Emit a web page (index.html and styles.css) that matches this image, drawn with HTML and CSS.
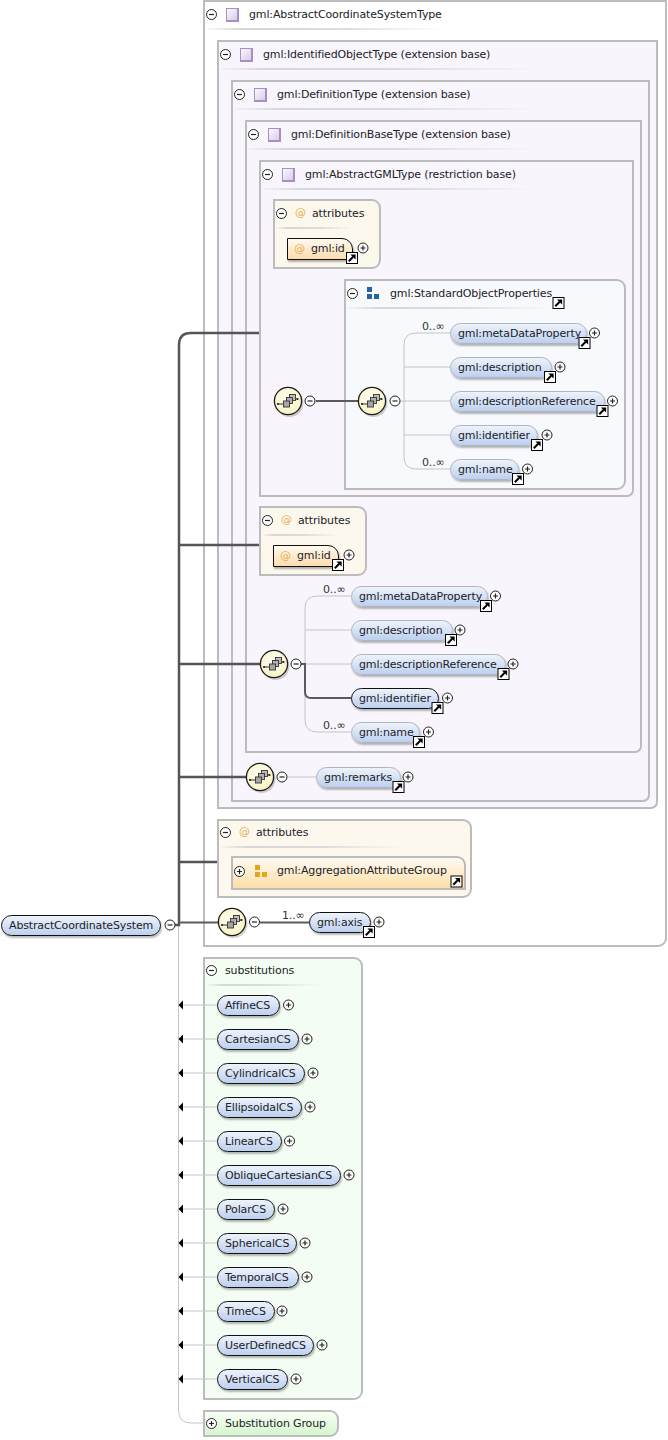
FILE: index.html
```html
<!DOCTYPE html>
<html lang="en">
<head>
<meta charset="utf-8">
<title>AbstractCoordinateSystem</title>
<link rel="stylesheet" href="styles.css">
</head>
<body>
<svg class="defs" aria-hidden="true">
  <defs>
    <g id="minus"><circle r="5" class="tg-c"/><path d="M-2.5 0H2.5" class="tg-l"/></g>
    <g id="plus"><circle r="5" class="tg-c"/><path d="M-2.5 0H2.5M0 -2.5V2.5" class="tg-l"/></g>
    <g id="link">
      <rect x="-5.5" y="-5.5" width="11" height="11" fill="#fff" stroke="#000"/>
      <path d="M-3.2 3.2L1.2 -1.2" stroke="#000" stroke-width="2" fill="none"/>
      <path d="M3.6 -3.6V1.6L-1.6 -3.6Z" fill="#000"/>
    </g>
    <radialGradient id="cg" cx="45%" cy="40%" r="65%">
      <stop offset="0" stop-color="#fffef2"/><stop offset="1" stop-color="#f8f2c0"/>
    </radialGradient>
    <g id="seq">
      <circle cx="1.5" cy="2" r="14" fill="#000" opacity=".18"/>
      <circle r="13.6" fill="url(#cg)" stroke="#1c1c1c" stroke-width="1.3"/>
      <path d="M-10 3H-5M7 -2H9.5" stroke="#333" fill="none"/>
      <circle cx="-10" cy="3" r="1.1" fill="#222"/><circle cx="9.5" cy="-2" r="1.1" fill="#222"/>
      <rect x="1.5" y="-6.5" width="6" height="6" fill="#bdbdbd" stroke="#333" stroke-width=".9"/>
      <rect x="-1.5" y="-3.5" width="6" height="6" fill="#b0b0b0" stroke="#333" stroke-width=".9"/>
      <rect x="-4.5" y="0" width="6" height="6" fill="#a6a6a6" stroke="#333" stroke-width=".9"/>
    </g>
    <g id="arrow"><path d="M0 0L4.5 -4.5V4.5Z" fill="#000"/></g>
    <g id="blocks">
      <rect x="0" y="0" width="5" height="5"/><rect x="0" y="7" width="5" height="5"/><rect x="7" y="7" width="5" height="5"/>
    </g>
  </defs>
</svg>

<main class="diagram">
  <section class="box b-main"><div class="head"><svg class="tg" viewBox="-5.5 -5.5 11 11"><use href="#minus"/></svg><i class="kind"></i><span class="lbl">gml:AbstractCoordinateSystemType</span></div><div class="rule"></div></section>
  <section class="box type b-ident"><div class="head"><svg class="tg" viewBox="-5.5 -5.5 11 11"><use href="#minus"/></svg><i class="kind"></i><span class="lbl">gml:IdentifiedObjectType (extension base)</span></div><div class="rule"></div></section>
  <section class="box type b-def"><div class="head"><svg class="tg" viewBox="-5.5 -5.5 11 11"><use href="#minus"/></svg><i class="kind"></i><span class="lbl">gml:DefinitionType (extension base)</span></div><div class="rule"></div></section>
  <section class="box type b-base"><div class="head"><svg class="tg" viewBox="-5.5 -5.5 11 11"><use href="#minus"/></svg><i class="kind"></i><span class="lbl">gml:DefinitionBaseType (extension base)</span></div><div class="rule"></div></section>
  <section class="box type b-gml"><div class="head"><svg class="tg" viewBox="-5.5 -5.5 11 11"><use href="#minus"/></svg><i class="kind"></i><span class="lbl">gml:AbstractGMLType (restriction base)</span></div><div class="rule"></div></section>

  <section class="box attrs b-at1"><div class="head"><svg class="tg" viewBox="-5.5 -5.5 11 11"><use href="#minus"/></svg><span class="at">@</span><span class="lbl">attributes</span></div><div class="rule"></div><div class="attr"><span class="at">@</span>gml:id</div></section>
  <section class="box attrs b-at2"><div class="head"><svg class="tg" viewBox="-5.5 -5.5 11 11"><use href="#minus"/></svg><span class="at">@</span><span class="lbl">attributes</span></div><div class="rule"></div><div class="attr"><span class="at">@</span>gml:id</div></section>
  <section class="box attrs b-at3"><div class="head tight"><svg class="tg" viewBox="-5.5 -5.5 11 11"><use href="#minus"/></svg><span class="at">@</span><span class="lbl">attributes</span></div><div class="rule"></div>
    <div class="group"><svg class="tg" viewBox="-5.5 -5.5 11 11"><use href="#plus"/></svg><svg class="blocks gold" viewBox="0 0 12 12"><use href="#blocks"/></svg><span class="lbl">gml:AggregationAttributeGroup</span></div>
  </section>

  <section class="box b-sop"><div class="head"><svg class="tg" viewBox="-5.5 -5.5 11 11"><use href="#minus"/></svg><svg class="blocks blue" viewBox="0 0 12 12"><use href="#blocks"/></svg><span class="lbl">gml:StandardObjectProperties</span></div><div class="rule"></div>
    <div class="list l-sop">
      <div class="pill w-meta">gml:metaDataProperty</div>
      <div class="pill w-desc">gml:description</div>
      <div class="pill w-ref">gml:descriptionReference</div>
      <div class="pill w-id">gml:identifier</div>
      <div class="pill w-name">gml:name</div>
    </div>
  </section>

  <div class="list l-base">
    <div class="pill w-meta">gml:metaDataProperty</div>
    <div class="pill w-desc">gml:description</div>
    <div class="pill w-ref">gml:descriptionReference</div>
    <div class="pill req w-id">gml:identifier</div>
    <div class="pill w-name">gml:name</div>
  </div>
  <div class="pill n-remarks">gml:remarks</div>
  <div class="pill req n-axis">gml:axis</div>
  <div class="pill req n-root">AbstractCoordinateSystem</div>

  <section class="box b-sub"><div class="head tight"><svg class="tg" viewBox="-5.5 -5.5 11 11"><use href="#minus"/></svg><span class="lbl sub-lbl">substitutions</span></div><div class="rule"></div>
    <div class="list l-sub">
      <div class="pill req s-affine">AffineCS</div>
      <div class="pill req s-cart">CartesianCS</div>
      <div class="pill req s-cyl">CylindricalCS</div>
      <div class="pill req s-ell">EllipsoidalCS</div>
      <div class="pill req s-lin">LinearCS</div>
      <div class="pill req s-obl">ObliqueCartesianCS</div>
      <div class="pill req s-pol">PolarCS</div>
      <div class="pill req s-sph">SphericalCS</div>
      <div class="pill req s-tem">TemporalCS</div>
      <div class="pill req s-tim">TimeCS</div>
      <div class="pill req s-usr">UserDefinedCS</div>
      <div class="pill req s-ver">VerticalCS</div>
    </div>
  </section>
  <section class="box b-sg"><svg class="tg" viewBox="-5.5 -5.5 11 11"><use href="#plus"/></svg><span class="lbl sub-lbl">Substitution Group</span></section>

  <svg class="wires" width="668" height="1440" viewBox="0 0 668 1440">
    <path class="thin" d="M178.5 925V1410Q178.5 1423 191 1423H203"/>
    <path class="thin" d="M450 333H416Q404 333 404 345V457Q404 469 416 469H450M404 367H450M400 401H450M404 435H450"/>
    <path class="thin" d="M351 596H317Q305 596 305 608V720Q305 732 317 732H351M305 630H351M301 664H351"/>
    <path class="thin" d="M288 777H316"/>
    <path class="thin" d="M182 1005H217M182 1039H217M182 1073H217M182 1107H217M182 1141H217M182 1175H217M182 1209H217M182 1243H217M182 1277H217M182 1311H217M182 1345H217M182 1379H217"/>
    <path class="thick" d="M175 925H179V345Q179 333 191 333H259M179 545H259M179 664H260M179 777H246M179 862H217"/>
    <path class="mid" d="M179 922.5H218M316 401H358M260 922.5H309"/>
    <path class="mid" d="M301 664H305V692Q305 698 311 698H351"/>

    <use href="#seq" x="288" y="401"/><use href="#minus" x="310" y="401"/>
    <use href="#seq" x="372" y="401"/><use href="#minus" x="395" y="401"/>
    <use href="#seq" x="274" y="664"/><use href="#minus" x="296" y="664"/>
    <use href="#seq" x="260" y="777"/><use href="#minus" x="282" y="777"/>
    <use href="#seq" x="232" y="922"/><use href="#minus" x="254.5" y="922"/>
    <use href="#minus" x="170" y="925"/>

    <text class="occ" x="422" y="330">0..∞</text><text class="occ" x="422" y="466">0..∞</text>
    <text class="occ" x="323" y="593">0..∞</text><text class="occ" x="323" y="729">0..∞</text>
    <text class="occ" x="282" y="919">1..∞</text>

    <use href="#plus" x="363" y="248"/><use href="#link" x="352" y="258"/>
    <use href="#plus" x="349" y="555"/><use href="#link" x="338" y="565"/>
    <use href="#link" x="558.5" y="303"/>
    <use href="#link" x="456.5" y="881.5"/>

    <use href="#plus" x="594.5" y="333"/><use href="#link" x="584.5" y="343"/>
    <use href="#plus" x="560" y="367"/><use href="#link" x="550" y="377"/>
    <use href="#plus" x="612.5" y="401"/><use href="#link" x="602.5" y="411"/>
    <use href="#plus" x="547" y="435"/><use href="#link" x="537" y="445"/>
    <use href="#plus" x="527.5" y="469"/><use href="#link" x="518" y="479"/>

    <use href="#plus" x="495.5" y="596"/><use href="#link" x="486" y="606"/>
    <use href="#plus" x="460" y="630"/><use href="#link" x="451" y="640"/>
    <use href="#plus" x="513" y="664"/><use href="#link" x="503.5" y="674"/>
    <use href="#plus" x="447.5" y="698"/><use href="#link" x="437.5" y="708"/>
    <use href="#plus" x="428.5" y="732"/><use href="#link" x="419" y="742"/>

    <use href="#plus" x="408" y="777"/><use href="#link" x="398.5" y="787"/>
    <use href="#plus" x="379" y="922"/><use href="#link" x="369" y="932"/>

    <use href="#arrow" x="178.5" y="1005"/><use href="#plus" x="288.5" y="1005"/>
    <use href="#arrow" x="178.5" y="1039"/><use href="#plus" x="307" y="1039"/>
    <use href="#arrow" x="178.5" y="1073"/><use href="#plus" x="313" y="1073"/>
    <use href="#arrow" x="178.5" y="1107"/><use href="#plus" x="310" y="1107"/>
    <use href="#arrow" x="178.5" y="1141"/><use href="#plus" x="289.5" y="1141"/>
    <use href="#arrow" x="178.5" y="1175"/><use href="#plus" x="349" y="1175"/>
    <use href="#arrow" x="178.5" y="1209"/><use href="#plus" x="283" y="1209"/>
    <use href="#arrow" x="178.5" y="1243"/><use href="#plus" x="305" y="1243"/>
    <use href="#arrow" x="178.5" y="1277"/><use href="#plus" x="307" y="1277"/>
    <use href="#arrow" x="178.5" y="1311"/><use href="#plus" x="282" y="1311"/>
    <use href="#arrow" x="178.5" y="1345"/><use href="#plus" x="322" y="1345"/>
    <use href="#arrow" x="178.5" y="1379"/><use href="#plus" x="296" y="1379"/>
  </svg>
</main>
</body>
</html>
```
FILE: styles.css
```css
* { box-sizing: border-box; }
html, body { margin: 0; padding: 0; background: #fff; }
.defs { position: absolute; width: 0; height: 0; }
.diagram {
  position: relative;
  width: 668px;
  height: 1440px;
  overflow: hidden;
  font: 11px/14px "DejaVu Sans", Verdana, sans-serif;
  letter-spacing: -0.14px;
  color: #222228;
}
.wires { position: absolute; left: 0; top: 0; pointer-events: none; }
.thin { fill: none; stroke: #c4c4c4; stroke-width: 1; }
.thick { fill: none; stroke: #555; stroke-width: 2.5; }
.mid { fill: none; stroke: #5c5c5c; stroke-width: 2; }
.tg-c { fill: #fff; stroke: #222; stroke-width: 1; }
.tg-l { stroke: #222; stroke-width: 1.2; fill: none; }
.occ { font: 11px "DejaVu Sans", Verdana, sans-serif; letter-spacing: -0.14px; fill: #333; }

.box { position: absolute; border: 2px solid #bcbcbc; background: #fff; }
.type { background: #f8f5fc; border-radius: 0 0 7px 0; }
.attrs { background: #fdf8ee; border-radius: 0 9px 9px 0; }
.head { display: flex; align-items: center; height: 24px; white-space: nowrap; }
.head.tight { height: 22px; }
.head .lbl { margin-top: 2px; }
.rule {
  position: absolute;
  left: 2px;
  top: 26px;
  width: 73%;
  height: 2px;
  background: linear-gradient(to right, rgba(200,200,200,.1), #d6d6d6 15%, #dcdcdc 55%, rgba(225,225,225,0));
}
.head.tight + .rule { top: 25px; }
.b-main .rule { width: 52%; }
.tg { flex: none; width: 11px; height: 11px; margin-left: 1px; }
.kind {
  flex: none;
  width: 13px;
  height: 14px;
  margin: 1px 0 0 9px;
  border: 1px solid #a98ec6;
  border-right-width: 2px;
  border-bottom-width: 2px;
  background: linear-gradient(135deg, #fbf9fd, #d8cde6);
}
.kind + .lbl { margin-left: 10px; }
.at { flex: none; width: 17px; margin-left: 8px; color: #e8b050; }
.blocks { flex: none; width: 12px; height: 12px; margin-left: 9px; margin-right: 11px; }
.blue { fill: #1f64ad; }
.gold { fill: #e9a41f; }
.sub-lbl { margin-left: 8px; }

.b-main { left: 203px; top: 0; width: 464px; height: 947px; border-radius: 0 0 9px 0; }
.b-ident { left: 217px; top: 40px; width: 441px; height: 769px; }
.b-def { left: 231px; top: 80px; width: 419px; height: 722px; }
.b-base { left: 245px; top: 120px; width: 397px; height: 633px; }
.b-gml { left: 259px; top: 160px; width: 375px; height: 337px; }
.b-at1 { left: 273px; top: 199px; width: 108px; height: 70px; }
.b-at2 { left: 259px; top: 506px; width: 108px; height: 70px; }
.b-at3 { left: 217px; top: 819px; width: 255px; height: 79px; }
.b-sop { left: 344px; top: 279px; width: 282px; height: 211px; background: #f7f9fd; border-radius: 0 9px 9px 0; }
.b-sub { left: 203px; top: 957px; width: 160px; height: 443px; background: #f4fdf3; border-radius: 0 9px 9px 0; }
.b-sg {
  left: 203px;
  top: 1410px;
  width: 136px;
  height: 27px;
  display: flex;
  align-items: center;
  border-radius: 0 9px 9px 0;
  background: linear-gradient(#f8fef6, #d6f6ce);
}

.attr {
  position: absolute;
  left: 12px;
  top: 37px;
  width: 66px;
  height: 22px;
  display: flex;
  align-items: center;
  border: 1.5px solid #111;
  border-radius: 0 11px 0 0;
  background: linear-gradient(#fffaf0, #fbdcae);
  box-shadow: 1px 2px 2px rgba(0,0,0,.3);
}
.attr .at { margin-left: 6px; }
.group {
  position: absolute;
  left: 12px;
  top: 35px;
  width: 235px;
  height: 34px;
  display: flex;
  align-items: center;
  padding-bottom: 4px;
  border: 2px solid #bcbcbc;
  border-radius: 0 9px 0 0;
  background: linear-gradient(#fffaf2, #fcdfa8);
}
.group .blocks { margin-left: 10px; margin-right: 10px; }

.list { position: absolute; display: flex; flex-direction: column; gap: 13px; align-items: flex-start; }
.pill {
  height: 21px;
  display: flex;
  align-items: center;
  padding-left: 7px;
  white-space: nowrap;
  border: 1px solid #aeb4c0;
  border-radius: 10.5px;
  background: linear-gradient(#eef3fb, #bdd0ef);
  box-shadow: 1px 2px 2px rgba(0,0,0,.28);
}
.req { border: 1.5px solid #111; }
.l-sop { left: 104px; top: 42px; }
.l-base { left: 351px; top: 586px; }
.l-sub { left: 12px; top: 36px; }
.w-meta { width: 137px; }
.w-desc { width: 102px; }
.w-ref { width: 155px; }
.w-id { width: 88px; }
.w-name { width: 69px; }
.n-remarks { position: absolute; left: 316px; top: 767px; width: 85px; }
.n-axis { position: absolute; left: 309px; top: 912px; width: 62px; }
.n-root { position: absolute; left: 1px; top: 915px; width: 160px; }
.s-affine { width: 63px; }
.s-cart { width: 82px; }
.s-cyl { width: 88px; }
.s-ell { width: 85px; }
.s-lin { width: 65px; }
.s-obl { width: 124px; }
.s-pol { width: 58px; }
.s-sph { width: 80px; }
.s-tem { width: 82px; }
.s-tim { width: 58px; }
.s-usr { width: 97px; }
.s-ver { width: 71px; }
```
